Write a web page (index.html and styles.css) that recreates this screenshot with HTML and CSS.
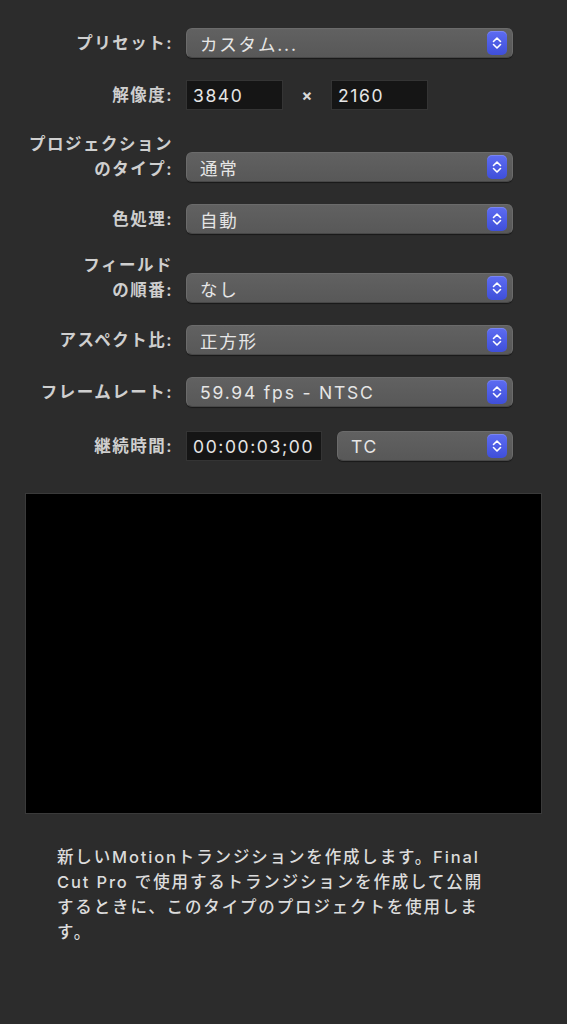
FILE: index.html
```html
<!DOCTYPE html>
<html lang="ja">
<head>
<meta charset="utf-8">
<title>プロジェクト設定</title>
<link rel="stylesheet" href="styles.css">
</head>
<body>
<div class="panel">
  <div class="form">
    <div class="row">
      <div class="label">プリセット:</div>
      <div class="popup wide"><span class="value">カスタム...</span><span class="stepper"><svg width="20" height="24" viewBox="0 0 20 24"><path d="M6.5 10.5 L10 7 L13.5 10.5 M6.5 13.5 L10 17 L13.5 13.5" fill="none" stroke="#fff" stroke-width="1.6" stroke-linecap="round" stroke-linejoin="round"/></svg></span></div>
    </div>
    <div class="row">
      <div class="label">解像度:</div>
      <div class="field res">3840</div>
      <div class="times">×</div>
      <div class="field res">2160</div>
    </div>
    <div class="row">
      <div class="label two">プロジェクション<br>のタイプ:</div>
      <div class="popup wide"><span class="value">通常</span><span class="stepper"><svg width="20" height="24" viewBox="0 0 20 24"><path d="M6.5 10.5 L10 7 L13.5 10.5 M6.5 13.5 L10 17 L13.5 13.5" fill="none" stroke="#fff" stroke-width="1.6" stroke-linecap="round" stroke-linejoin="round"/></svg></span></div>
    </div>
    <div class="row">
      <div class="label">色処理:</div>
      <div class="popup wide"><span class="value">自動</span><span class="stepper"><svg width="20" height="24" viewBox="0 0 20 24"><path d="M6.5 10.5 L10 7 L13.5 10.5 M6.5 13.5 L10 17 L13.5 13.5" fill="none" stroke="#fff" stroke-width="1.6" stroke-linecap="round" stroke-linejoin="round"/></svg></span></div>
    </div>
    <div class="row tight">
      <div class="label two">フィールド<br>の順番:</div>
      <div class="popup wide"><span class="value">なし</span><span class="stepper"><svg width="20" height="24" viewBox="0 0 20 24"><path d="M6.5 10.5 L10 7 L13.5 10.5 M6.5 13.5 L10 17 L13.5 13.5" fill="none" stroke="#fff" stroke-width="1.6" stroke-linecap="round" stroke-linejoin="round"/></svg></span></div>
    </div>
    <div class="row">
      <div class="label">アスペクト比:</div>
      <div class="popup wide"><span class="value">正方形</span><span class="stepper"><svg width="20" height="24" viewBox="0 0 20 24"><path d="M6.5 10.5 L10 7 L13.5 10.5 M6.5 13.5 L10 17 L13.5 13.5" fill="none" stroke="#fff" stroke-width="1.6" stroke-linecap="round" stroke-linejoin="round"/></svg></span></div>
    </div>
    <div class="row">
      <div class="label">フレームレート:</div>
      <div class="popup wide"><span class="value">59.94 fps - NTSC</span><span class="stepper"><svg width="20" height="24" viewBox="0 0 20 24"><path d="M6.5 10.5 L10 7 L13.5 10.5 M6.5 13.5 L10 17 L13.5 13.5" fill="none" stroke="#fff" stroke-width="1.6" stroke-linecap="round" stroke-linejoin="round"/></svg></span></div>
    </div>
    <div class="row loose">
      <div class="label">継続時間:</div>
      <div class="field dur">00:00:03;00</div>
      <div class="popup tc"><span class="value">TC</span><span class="stepper"><svg width="20" height="24" viewBox="0 0 20 24"><path d="M6.5 10.5 L10 7 L13.5 10.5 M6.5 13.5 L10 17 L13.5 13.5" fill="none" stroke="#fff" stroke-width="1.6" stroke-linecap="round" stroke-linejoin="round"/></svg></span></div>
    </div>
  </div>
  <div class="preview"></div>
  <p class="desc">新しいMotionトランジションを作成します。Final Cut Pro で使用するトランジションを作成して公開するときに、このタイプのプロジェクトを使用します。</p>
</div>
</body>
</html>
```
FILE: styles.css
```css
html, body {
  margin: 0;
  padding: 0;
  background: #2c2c2c;
}
body {
  width: 567px;
  height: 1024px;
  overflow: hidden;
  font-family: Inter, "Noto Sans CJK JP", sans-serif;
}
.panel {
  padding-top: 28px;
}
.form {
  display: flex;
  flex-direction: column;
}
.row {
  display: flex;
  align-items: flex-end;
}
.row + .row {
  margin-top: 22px;
}
.row.tight {
  margin-top: 19px;
}
.row.loose {
  margin-top: 24px;
}
.label {
  width: 173px;
  margin-right: 13px;
  text-align: right;
  font-size: 16.5px;
  letter-spacing: 1.5px;
  line-height: 30px;
  font-weight: 600;
  color: #cfcfcf;
  flex: none;
}
.label.two {
  line-height: 25px;
}
.popup {
  position: relative;
  height: 30px;
  box-sizing: border-box;
  border-radius: 6px;
  background: linear-gradient(#616161, #585858);
  border: 1px solid #6b6b6b;
  border-bottom-color: #474747;
  box-shadow: 0 1px 1px rgba(0, 0, 0, 0.45);
  display: flex;
  align-items: center;
  padding-left: 13px;
  flex: none;
}
.popup.wide {
  width: 327px;
}
.popup.tc {
  width: 176px;
  margin-left: 15px;
}
.value {
  font-size: 17.5px;
  letter-spacing: 1.8px;
  font-weight: 400;
  color: #e6e6e6;
  white-space: nowrap;
}
.stepper {
  position: absolute;
  right: 5px;
  top: 2px;
  width: 20px;
  height: 24px;
  border-radius: 5px;
  background: linear-gradient(#5d6cf2, #3f4fd9);
  box-shadow: inset 0 1px 0 rgba(255, 255, 255, 0.18);
  display: block;
}
.stepper svg {
  display: block;
}
.field {
  height: 30px;
  box-sizing: border-box;
  background: #151515;
  border: 1px solid #343434;
  display: flex;
  align-items: center;
  padding-left: 6px;
  font-size: 17.5px;
  letter-spacing: 1.6px;
  font-weight: 400;
  color: #e6e6e6;
  white-space: nowrap;
  flex: none;
}
.field.res {
  width: 97px;
}
.field.dur {
  width: 136px;
}
.times {
  width: 48px;
  height: 30px;
  line-height: 30px;
  text-align: center;
  font-size: 16px;
  font-weight: 700;
  color: #d8d8d8;
}
.preview {
  margin: 32px 0 0 25px;
  width: 517px;
  height: 321px;
  box-sizing: border-box;
  background: #000;
  border: 1px solid #3a3a3a;
}
.desc {
  margin: 31px 0 0 57px;
  width: 436px;
  font-size: 16.5px;
  line-height: 25px;
  letter-spacing: 1.85px;
  font-weight: 500;
  color: #dcdcdc;
}
```
